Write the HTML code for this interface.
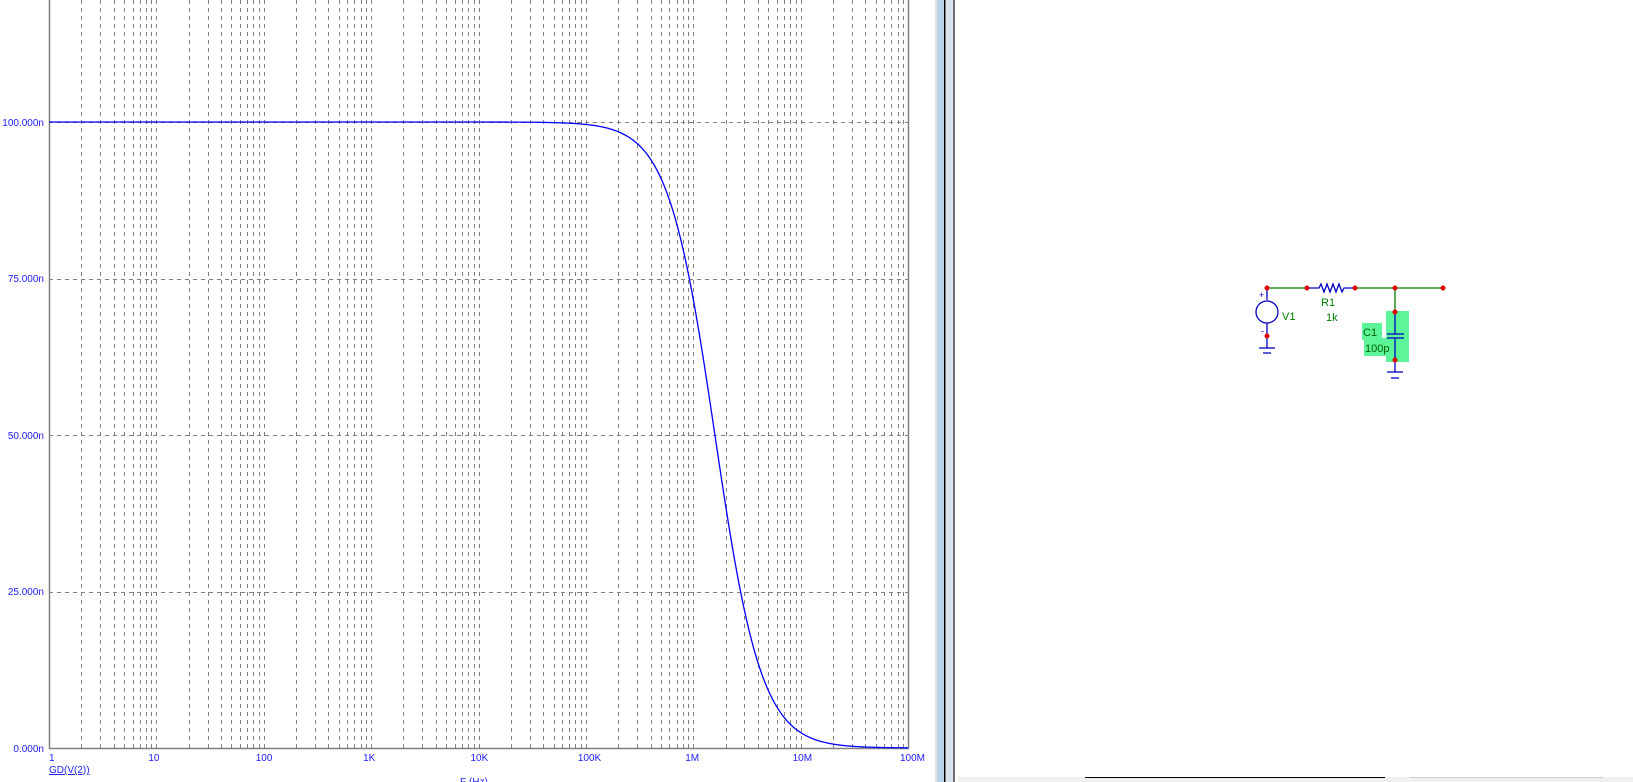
<!DOCTYPE html>
<html><head><style>
html,body{margin:0;padding:0;width:1633px;height:782px;overflow:hidden;background:#fff;font-family:"Liberation Sans",sans-serif}
svg{position:absolute;left:0;top:0}
</style></head><body>
<svg id="s" width="1633" height="782" xmlns="http://www.w3.org/2000/svg">
<g id="grid" stroke="#808080" stroke-width="1" stroke-dasharray="4,4"></g>
<line x1="49.5" y1="0" x2="49.5" y2="749" stroke="#808080" stroke-width="1.5"/>
<line x1="908.5" y1="0" x2="908.5" y2="749" stroke="#808080" stroke-width="1.5"/>
<line x1="49" y1="748.5" x2="909" y2="748.5" stroke="#808080" stroke-width="1.5"/>
<path id="curve" fill="none" stroke="#0000ff" stroke-width="1.3"/>
<g font-size="10" fill="#2020ff" font-family="Liberation Sans,sans-serif">
<text x="44" y="126" text-anchor="end">100.000n</text>
<text x="44" y="282" text-anchor="end">75.000n</text>
<text x="44" y="439" text-anchor="end">50.000n</text>
<text x="44" y="595" text-anchor="end">25.000n</text>
<text x="44" y="752" text-anchor="end">0.000n</text>
<g id="xl"></g>
<text x="49" y="773" text-decoration="underline">GD(V(2))</text>
<text x="460" y="785">F (Hz)</text>
</g>
<!-- splitter -->
<rect x="935" y="0" width="2" height="782" fill="#e0e0e0"/>
<rect x="937" y="0" width="7" height="782" fill="#bcd4ea"/>
<rect x="944" y="0" width="1.5" height="782" fill="#000"/>
<rect x="946" y="0" width="7" height="782" fill="#d8e4f0"/>
<rect x="953" y="0" width="2" height="782" fill="#707070"/>
<!-- bottom tabs -->
<rect x="958" y="777" width="675" height="5" fill="#f0f0f0"/>
<line x1="1085" y1="777.5" x2="1385" y2="777.5" stroke="#000"/>
<line x1="1410" y1="777.5" x2="1603" y2="777.5" stroke="#ccc"/>
<!-- schematic -->
<g stroke="#008000" stroke-width="1.3" fill="none">
<line x1="1267" y1="288" x2="1307" y2="288"/>
<line x1="1355" y1="288" x2="1443" y2="288"/>
<line x1="1395" y1="288" x2="1395" y2="312"/>
</g>
<rect x="1386" y="311" width="23" height="51" fill="#5cf59a"/>
<rect x="1362" y="323" width="20" height="17" fill="#5cf59a"/>
<rect x="1364" y="338" width="26" height="18" fill="#5cf59a"/>
<g stroke="#0000c0" stroke-width="1.3" fill="none">
<line x1="1267" y1="288" x2="1267" y2="300"/>
<circle cx="1267" cy="312" r="11"/>
<line x1="1267" y1="323" x2="1267" y2="348"/>
<line x1="1259" y1="348" x2="1275" y2="348"/><line x1="1263" y1="353" x2="1271" y2="353"/>
<path d="M1307 288 H1319 L1321 284 L1324 292 L1327 284 L1330 292 L1333 284 L1336 292 L1339 284 L1342 292 L1344 288 H1355"/>
<line x1="1395" y1="312" x2="1395" y2="334"/>
<line x1="1387" y1="334" x2="1404" y2="334"/><line x1="1387" y1="338" x2="1404" y2="338"/>
<line x1="1395" y1="338" x2="1395" y2="372"/>
<line x1="1387" y1="372" x2="1403" y2="372"/><line x1="1391" y1="378" x2="1399" y2="378"/>
</g>
<g fill="#e00000">
<circle cx="1267" cy="288" r="2.5"/><circle cx="1307" cy="288" r="2.5"/><circle cx="1355" cy="288" r="2.5"/>
<circle cx="1395" cy="288" r="2.5"/><circle cx="1443" cy="288" r="2.5"/><circle cx="1267" cy="336" r="2.5"/>
<circle cx="1395" cy="312" r="2.5"/><circle cx="1395" cy="360" r="2.5"/>
</g>
<g font-size="11" font-family="Liberation Sans,sans-serif">
<text x="1259" y="298" fill="#0000c0" font-size="9">+</text>
<text x="1261" y="334" fill="#0000c0" font-size="9">-</text>
<text x="1282" y="320" fill="#008000">V1</text>
<text x="1321" y="306" fill="#008000">R1</text>
<text x="1326" y="321" fill="#008000">1k</text>
<text x="1363" y="336" fill="#006000">C1</text>
<text x="1365" y="352" fill="#006000">100p</text>
</g>
</svg>
<script>
var ns="http://www.w3.org/2000/svg",g=document.getElementById('grid'),xl=document.getElementById('xl');
function X(f){return 49+107.375*Math.log10(f);}
function ln(x1,y1,x2,y2){var l=document.createElementNS(ns,'line');l.setAttribute('x1',x1);l.setAttribute('y1',y1);l.setAttribute('x2',x2);l.setAttribute('y2',y2);g.appendChild(l);}
for(var d=0;d<8;d++){for(var m=1;m<=10;m++){if(m==1&&d==0)continue;if(m==10&&d==7)continue;var x=Math.round(X(m*Math.pow(10,d)))+0.5;ln(x,0,x,748);}}
[122,278.5,435,591.5].forEach(function(y){ln(49,Math.round(y)+0.5,908,Math.round(y)+0.5);});
var labs=['1','10','100','1K','10K','100K','1M','10M','100M'];
labs.forEach(function(t,i){var e=document.createElementNS(ns,'text');e.setAttribute('x',49+107.375*i+(i==0?0:-8));e.setAttribute('y',761);e.textContent=t;xl.appendChild(e);});
var p='';for(var i=0;i<=1600;i++){var lf=i*8/1600,f=Math.pow(10,lf),w=2*Math.PI*f*1e-7,gd=100/(1+w*w);var x=X(f),y=748-6.26*gd;p+=(i?'L':'M')+x.toFixed(2)+' '+y.toFixed(2);}
document.getElementById('curve').setAttribute('d',p);
</script>
</body></html>
